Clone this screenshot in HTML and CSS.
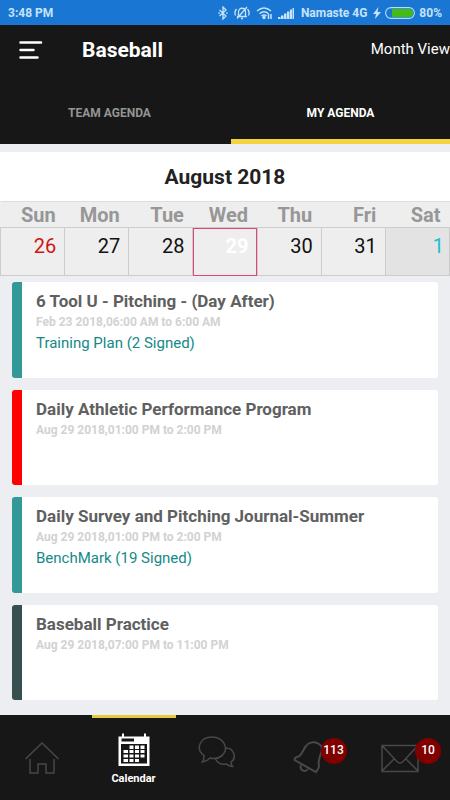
FILE: index.html
```html
<!DOCTYPE html>
<html lang="en">
<head>
<meta charset="utf-8">
<meta name="viewport" content="width=device-width, initial-scale=1">
<title>Baseball – My Agenda</title>
<link rel="stylesheet" href="styles.css">
</head>
<body>
<div class="status">
  <span>3:48 PM</span>
  <div class="status-right">
    <svg width="10" height="14" viewBox="0 0 10 14" fill="none" stroke="currentColor" stroke-width="1.3"><path d="M1.5 4l6.5 6-3 3V1l3 3-6.5 6M.4 7h1.4M8.2 7h1.4"/></svg>
    <svg width="16" height="14" viewBox="0 0 16 14" fill="none" stroke="currentColor" stroke-width="1.3"><path d="M3 10.500h10M4.500 10V6c0-5 7-5 7 0v4M7 12.500h2M13 1L3 12.500M2.500 3Q0 6 1.500 9.500M13.500 3Q16 6 14.500 9.500"/></svg>
    <svg width="16" height="14" viewBox="0 0 16 14" fill="none" stroke="currentColor" stroke-width="1.500"><path d="M1 5q7-6 14 0M3.500 7.700q4.500-4 9 0M5.500 10q2.500-2 5 0M12.500 8v5M15 8v5"/><circle cx="8" cy="11.500" r="1" fill="currentColor"/></svg>
    <svg class="signal" width="16" height="12" viewBox="0 0 16 12" fill="currentColor"><path d="M0 10h2.500v2H0zM3 8.500h2.500V12H3zM6 6.500h2.500V12H6zM9 4.500h2.500V12H9zM12 2.500h2V12h-2zM14.500 1H16v11h-1.500z"/></svg>
    <span class="carrier">Namaste 4G</span>
    <svg width="8" height="12" viewBox="0 0 8 12" fill="currentColor"><path d="M5.500 0L0 7h3l-1 5 6-7H4.500z"/></svg>
    <svg class="battery" width="30" height="12" viewBox="0 0 30 12"><rect x=".6" y=".6" width="28.800" height="10.800" rx="5.400" fill="none" stroke="#b9dcf7" stroke-width="1.100"/><path d="M7 2h17a4 4 0 0 1 0 8H7z" fill="#43bb12"/></svg>
    <span>80%</span>
  </div>
</div>
<header class="top">
  <div class="bar">
    <button class="menu" aria-label="Menu"><svg width="24" height="20" viewBox="0 0 24 20" stroke="#fff" stroke-width="2.500" stroke-linecap="round"><path d="M1.500 2.500h20.500M1.500 10h13M1.500 17.500h17"/></svg></button>
    <h1>Baseball</h1>
    <button class="view">Month View</button>
  </div>
  <nav class="tabs">
    <button class="tab">TEAM AGENDA</button>
    <button class="tab active">MY AGENDA</button>
  </nav>
</header>
<main>
  <table class="calendar">
    <caption>August 2018</caption>
    <thead><tr><th>Sun</th><th>Mon</th><th>Tue</th><th>Wed</th><th>Thu</th><th>Fri</th><th>Sat</th></tr></thead>
    <tbody><tr><td class="sunday">26</td><td>27</td><td>28</td><td class="selected">29</td><td>30</td><td>31</td><td class="next">1</td></tr></tbody>
  </table>
  <section class="events">
    <article class="event teal">
      <h2>6 Tool U - Pitching - (Day After)</h2>
      <p class="time">Feb 23 2018,06:00 AM to 6:00 AM</p>
      <a href="#">Training Plan (2 Signed)</a>
    </article>
    <article class="event red">
      <h2>Daily Athletic Performance Program</h2>
      <p class="time">Aug 29 2018,01:00 PM to 2:00 PM</p>
    </article>
    <article class="event teal">
      <h2>Daily Survey and Pitching Journal-Summer</h2>
      <p class="time">Aug 29 2018,01:00 PM to 2:00 PM</p>
      <a href="#">BenchMark (19 Signed)</a>
    </article>
    <article class="event slate">
      <h2>Baseball Practice</h2>
      <p class="time">Aug 29 2018,07:00 PM to 11:00 PM</p>
    </article>
  </section>
</main>
<nav class="bottom">
  <a class="item" href="#" aria-label="Home"><svg width="36" height="34" viewBox="0 0 36 34"><path d="M1.500 18L18 2l16.500 16M6 18v14h8V23h8v9h8V18"/></svg></a>
  <a class="item current" href="#">
    <svg width="32" height="34" viewBox="0 0 32 34"><path fill="#fff" fill-rule="evenodd" d="M.5 3.500H4V.5h2v3h20V.5h2v3h3.500V33H.5zM3.500 5.500v3H16v-3zM3 11v19.500h26V11z"/><path fill="#fff" d="M11.500 12.500h4V16h-4zM17 12.500h4V16h-4zM22.500 12.500h4V16h-4zM5.500 17h4.500v3H5.500zM11.500 17h4v3h-4zM17 17h4v3h-4zM22.500 17h4v3h-4zM5.500 21.500h4.500v3H5.500zM11.500 21.500h4v3h-4zM17 21.500h4v3h-4zM22.500 21.500h4v3h-4zM5.500 26h4.500v3H5.500zM11.500 26h4v3h-4zM17 26h4v3h-4z"/></svg>
    <span>Calendar</span>
  </a>
  <a class="item counted chat" href="#" aria-label="Messages"><svg width="38" height="34" viewBox="0 0 38 34"><path d="M6 20.500C-3 14 2 2 14 2s18 13 9 19c-3 2.500-8 3-11 2-2 2-4 3.500-7.500 4C6 25 6 22.500 6 20.500zM28 13c8 0 11 10 5 14 0 2 .5 3 1.500 4.500-3 0-4-1-6-2.500-5 1-9-1-11-5q9-2 10.500-11z"/></svg></a>
  <a class="item counted" href="#" aria-label="Notifications, 113">
    <span class="holder"><svg width="32" height="34" viewBox="0 0 32 34"><path stroke-width="2" d="M13 5C16 1 22 0 26 3c5 3 3 8 1 12-1 4-2 7-1 10 0 3-2 4-3 6L1.500 19c0-3 2-3 5-4 3-3 4-7 6.500-10zM8 24c-2 5 4 8 7 4"/></svg><b class="badge">113</b></span>
  </a>
  <a class="item counted" href="#" aria-label="Mail, 10">
    <span class="holder"><svg width="38" height="34" viewBox="0 0 38 34"><path d="M1 4.500h36v26H1zM1 4.500l15 16q3 3 6 0l15-16M1 30l12-12M37 30L25 18"/></svg><b class="badge">10</b></span>
  </a>
</nav>
</body>
</html>
```
FILE: styles.css
```css
* { box-sizing: border-box; }
body {
  margin: 0;
  min-height: 100vh;
  display: flex;
  flex-direction: column;
  background: #eceef2;
  font-family: Roboto, "Liberation Sans", sans-serif;
}
h1, h2, p { margin: 0; }
button { border: 0; padding: 0; background: none; color: inherit; font: inherit; }
a { text-decoration: none; }
svg { display: block; }

.status {
  display: flex;
  justify-content: space-between;
  align-items: center;
  height: 25px;
  padding: 0 8px;
  background: #1976d2;
  color: #c5e3fa;
  font-size: 12px;
  font-weight: 700;
}
.status-right { display: flex; align-items: center; gap: 4px; }
.status-right svg { margin-left: 2px; }
.status-right .battery { margin-left: 0; }
.carrier { margin-left: 3px; }

.top { background: #171717; color: #fff; }
.bar { display: flex; align-items: center; height: 50px; padding-left: 19px; }
h1 { margin-left: 39px; font-size: 21px; line-height: 28px; font-weight: 700; }
.view { margin-left: auto; font-size: 15px; line-height: 20px; padding-bottom: 2px; }
.tabs { display: flex; margin-top: 8px; }
.tab {
  flex: 1;
  height: 61px;
  padding-top: 4px;
  border-bottom: 5px solid transparent;
  color: #949494;
  font-size: 12px;
  font-weight: 700;
}
.tab:first-child { padding-right: 12px; }
.tab.active { border-color: #f2d23f; color: #fff; }

main { flex: 1; display: flex; flex-direction: column; padding-top: 8px; }
.calendar {
  width: 100%;
  table-layout: fixed;
  border-collapse: collapse;
  background: #eee;
}
.calendar caption {
  height: 49px;
  background: #fff;
  color: #222;
  font-size: 21px;
  line-height: 50px;
  font-weight: 700;
}
.calendar th {
  height: 26px;
  padding: 0 9px 0 0;
  border-top: 1px solid #ddd;
  color: #979797;
  font-size: 20px;
  line-height: 24px;
  font-weight: 700;
  text-align: right;
}
.calendar td {
  height: 48px;
  padding: 6px 8px 0 0;
  border: 1px solid #ccc;
  color: #111;
  font-size: 20px;
  line-height: 24px;
  text-align: right;
  vertical-align: top;
}
.calendar .sunday { color: #cf1515; }
.calendar .selected { outline: 1px solid #e0457a; outline-offset: -1px; color: #fff; font-weight: 700; }
.calendar .next { padding-right: 5px; background: #e3e3e3; color: #20bcd0; }

.events {
  flex: 1;
  display: grid;
  grid-auto-rows: 1fr;
  gap: 12px;
  padding: 6px 12px 15px;
}
.event {
  padding: 9px 14px;
  border-left: 10px solid;
  border-radius: 3px;
  background: #fff;
}
.event.teal { border-color: #339898; }
.event.red { border-color: #f00; }
.event.slate { border-color: #35504f; }
.event h2 { color: #606060; font-size: 17px; line-height: 20px; font-weight: 700; }
.time { margin-top: 2px; color: #d2d2d2; font-size: 12px; line-height: 19px; font-weight: 700; }
.event a { display: block; margin-top: 1px; color: #148987; font-size: 15px; line-height: 20px; }

.bottom { display: flex; justify-content: space-between; height: 85px; background: #171717; }
.item {
  display: flex;
  flex-direction: column;
  align-items: center;
  width: 84px;
  padding-top: 26px;
}
.item svg { fill: none; stroke: #484848; stroke-width: 1.500; }
.item.counted { padding-right: 16px; }
.item.chat { padding-top: 20px; }
.item.current { padding-top: 15px; border-top: 3px solid #e5cb3c; color: #fff; }
.item.current svg { stroke: none; }
.item.current span { margin-top: 5px; font-size: 11px; line-height: 14px; font-weight: 700; }
.holder { position: relative; }
.badge {
  position: absolute;
  top: -3px;
  right: -22px;
  width: 26px;
  height: 26px;
  border-radius: 50%;
  background: #800000;
  color: #fff;
  font-size: 12px;
  line-height: 25px;
  font-weight: 500;
  text-align: center;
}
```
